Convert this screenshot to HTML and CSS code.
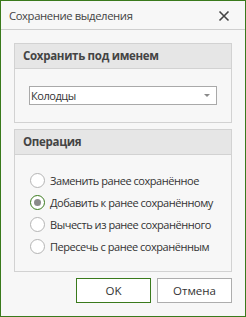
FILE: index.html
```html
<!DOCTYPE html>
<html lang="ru">
<head>
    <meta charset="UTF-8">
    <meta name="viewport" content="width=device-width, initial-scale=1.0">
    <title>Сохранение выделения</title>
    <link rel="stylesheet" href="styles.css">
</head>
<body>
    <div class="dialog">
        <div class="dialog-title">
            <span>Сохранение выделения</span>
            <svg class="close-icon" width="12" height="12" viewBox="0 0 12 12">
                <path d="M1.5 1.5 L10.5 10.5 M10.5 1.5 L1.5 10.5" stroke="#444" stroke-width="1.6" fill="none"/>
            </svg>
        </div>
        <div class="dialog-body">
            <div class="panel panel-name">
                <div class="panel-header">Сохранить под именем</div>
                <div class="panel-content">
                    <div class="combo">
                        <span>Колодцы</span>
                        <span class="combo-arrow"></span>
                    </div>
                </div>
            </div>
            <div class="panel panel-operation">
                <div class="panel-header">Операция</div>
                <div class="panel-content">
                    <label class="radio-row"><span class="radio"></span>Заменить ранее сохранённое</label>
                    <label class="radio-row"><span class="radio checked"></span>Добавить к ранее сохранённому</label>
                    <label class="radio-row"><span class="radio"></span>Вычесть из ранее сохранённого</label>
                    <label class="radio-row"><span class="radio"></span>Пересечь с ранее сохранённым</label>
                </div>
            </div>
            <div class="buttons">
                <button class="btn btn-primary">OK</button>
                <button class="btn">Отмена</button>
            </div>
        </div>
    </div>
</body>
</html>
```

FILE: styles.css
```css
/* Page */
body {
    margin: 0;
    font-family: 'Open Sans', 'DejaVu Sans', sans-serif;
    font-size: 11px;
    letter-spacing: -0.45px;
    color: #333;
    background: #f7f7f7;
}

/* Dialog frame */
.dialog {
    width: 246px;
    height: 317px;
    box-sizing: border-box;
    border: 1px solid #3a7a1c;
    background: #f7f7f7;
    display: flex;
    flex-direction: column;
}

.dialog-title {
    height: 28px;
    border-bottom: 1px solid #cfcfcf;
    display: flex;
    align-items: center;
    justify-content: space-between;
    padding: 0 15px 0 8px;
    font-size: 11.3px;
    letter-spacing: -0.4px;
    color: #444;
    white-space: nowrap;
}

.close-icon {
    display: block;
    margin-top: 1px;
}

.dialog-body {
    padding: 13px 13px 13px 13px;
    display: flex;
    flex-direction: column;
    gap: 6px;
}

/* Group panels */
.panel {
    border: 1px solid #d2d2d2;
    background: #f7f7f7;
}

.panel-header {
    height: 24px;
    line-height: 24px;
    background: #e6e6e6;
    border-bottom: 1px solid #d2d2d2;
    padding-left: 8px;
    font-size: 11.5px;
    letter-spacing: -0.3px;
    font-weight: bold;
    color: #444;
    white-space: nowrap;
}

.panel-name .panel-content {
    padding: 17px 14px;
}

.panel-operation .panel-content {
    padding: 14px 15px;
}

/* Combo box */
.combo {
    height: 19px;
    box-sizing: border-box;
    border: 1px solid #a9a9a9;
    background: #fff;
    display: flex;
    align-items: center;
    justify-content: space-between;
    padding: 0 6px 0 1px;
    color: #333;
}

.combo-arrow {
    width: 0;
    height: 0;
    border-left: 3px solid transparent;
    border-right: 3px solid transparent;
    border-top: 3px solid #8a8a8a;
}

/* Radio list */
.radio-row {
    height: 22px;
    display: flex;
    align-items: center;
    gap: 5px;
    white-space: nowrap;
}

.radio {
    flex: none;
    width: 15px;
    height: 15px;
    box-sizing: border-box;
    border: 1px solid #b4b4b4;
    border-radius: 50%;
    background: #fff;
    display: flex;
    align-items: center;
    justify-content: center;
}

.radio.checked {
    border-color: #3a7a1c;
}

.radio.checked::after {
    content: "";
    width: 7px;
    height: 7px;
    border-radius: 50%;
    background: #8a8a8a;
}

/* Buttons */
.buttons {
    display: flex;
    justify-content: flex-end;
    gap: 6px;
}

.btn {
    width: 75px;
    height: 25px;
    background: #fff;
    border: 1px solid #adadad;
    font-family: inherit;
    font-size: 11.5px;
    letter-spacing: 0;
    color: #333;
    padding: 0;
}

.btn-primary {
    border-color: #3a7a1c;
}
```
